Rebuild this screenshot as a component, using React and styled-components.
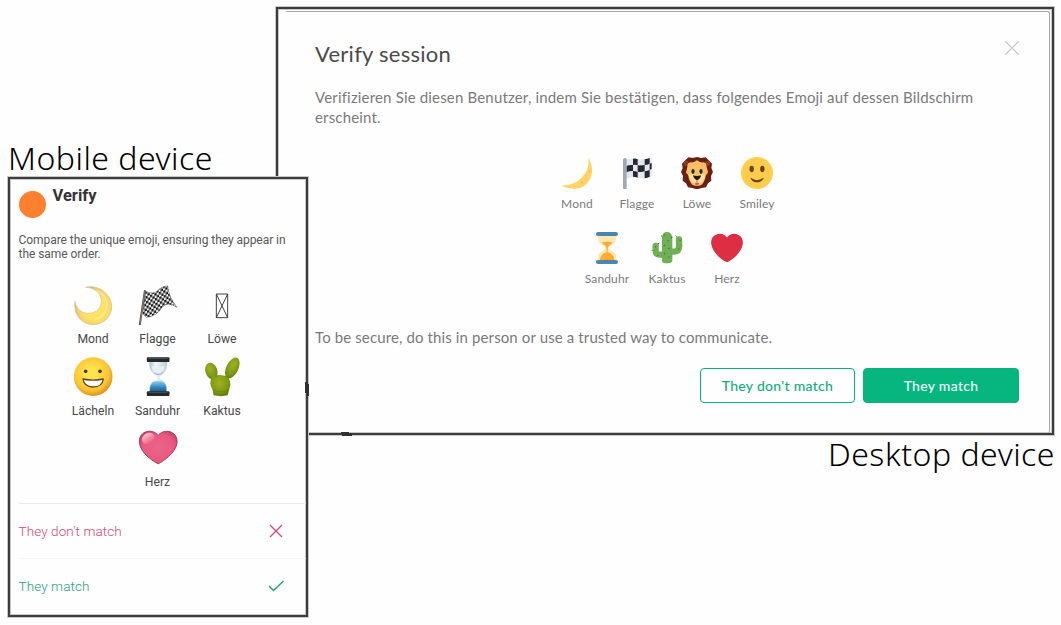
import React from "react";
import styled, { createGlobalStyle } from "styled-components";

const Global = createGlobalStyle`
  *, *::before, *::after { box-sizing: border-box; }
  body { margin: 0; background: #fefefe; overflow: hidden; }
  h1, h2, p, figure { margin: 0; font-weight: inherit; }
  button { font: inherit; cursor: pointer; }
`;

const Page = styled.main`
  display: grid;
  width: 1061px;
  height: 625px;
`;

const Device = styled.figure`
  grid-area: 1 / 1;
  display: flex;
  flex-direction: column;
  align-self: start;
`;

const DesktopDevice = styled(Device)`
  width: 778px;
  margin: 7px 0 0 276px;
`;

const MobileDevice = styled(Device)`
  width: 300px;
  margin: 138px 0 0 8px;
  z-index: 1;
`;

const Caption = styled.figcaption`
  height: 39px;
  font: 300 32px/${(p) => p.$line || "40px"} "Noto Sans", "Open Sans", sans-serif;
  letter-spacing: 0.5px;
  color: #000;
  white-space: nowrap;
  align-self: ${(p) => p.$align || "flex-start"};
  margin-right: -1px;
`;

const Frame = styled.div`
  border: 2px solid #3c3c3c;
  box-shadow: 0 0 0 1px #c8c8c8, inset 0 0 0 1px #c8c8c8;
  background: #fefefe;
  display: flex;
`;

const DesktopFrame = styled(Frame)`
  height: 428px;
  padding: 2px 2px 0 8px;
`;

const Dialog = styled.section`
  flex: 1;
  display: flex;
  flex-direction: column;
  border-top: 1px solid #a8a8a8;
  border-right: 1px solid #a8a8a8;
  border-radius: 0 3px 3px 0;
  padding: 27px 30px 0 29px;
  font-family: Lato, sans-serif;
  color: #7a7a7a;
`;

const DialogHeader = styled.header`
  display: flex;
  justify-content: space-between;
`;

const DialogTitle = styled.h1`
  font-size: 22px;
  line-height: 30px;
  letter-spacing: 0.25px;
  color: #4a4a4a;
`;

const CloseIcon = styled.svg`
  width: 14px;
  height: 14px;
  margin-top: 2px;
`;

const DialogText = styled.p`
  font-size: 15px;
  line-height: 20px;
  letter-spacing: ${(p) => p.$spacing};
  margin-top: ${(p) => p.$top};
  white-space: nowrap;
`;

const EmojiGrid = styled.div`
  display: flex;
  flex-direction: column;
  align-items: center;
`;

const EmojiRow = styled.div`
  display: flex;
`;

const DesktopEmojis = styled(EmojiGrid)`
  margin-top: 30px;
`;

const MobileEmojis = styled(EmojiGrid)`
  margin-top: 24px;
  padding-right: 1px;
`;

const Emoji = styled.div`
  display: flex;
  flex-direction: column;
  align-items: center;
  width: 60px;
  height: 75px;
  font-size: 12px;
  line-height: 15px;
  letter-spacing: 0.15px;
  svg { width: 32px; height: 32px; margin-bottom: 7px; }
`;

const MobileEmoji = styled(Emoji)`
  width: 64.5px;
  height: 71.5px;
  font-size: 12.2px;
  letter-spacing: 0;
  color: #484848;
  svg { width: 40px; height: 40px; margin-bottom: 7px; }
`;

const Buttons = styled.div`
  display: flex;
  justify-content: flex-end;
  gap: 8px;
  margin-top: 21px;
`;

const Button = styled.button`
  width: ${(p) => (p.$primary ? "156px" : "155px")};
  height: 35px;
  padding: 0;
  border: 1px solid #03b381;
  border-radius: 4px;
  background: ${(p) => (p.$primary ? "#07b67f" : "#fefefe")};
  color: ${(p) => (p.$primary ? "#f2fffa" : "#13ac7c")};
  font-size: 14px;
  font-weight: 500;
  letter-spacing: 0.3px;
`;

const MobileFrame = styled(Frame)`
  height: 440px;
  flex-direction: column;
  font-family: Roboto, sans-serif;
  color: #585858;
`;

const MobileHeader = styled.header`
  display: flex;
  gap: 7px;
  padding: 6px 0 0 8.5px;
`;

const Avatar = styled.span`
  width: 27px;
  height: 27px;
  margin-top: 6px;
  border-radius: 50%;
  background: #ff802e;
`;

const MobileTitle = styled.h2`
  font-size: 16.5px;
  font-weight: 700;
  line-height: 22px;
  color: #333;
`;

const MobileText = styled.p`
  padding: 15px 0 0 8.5px;
  font-size: 12px;
  line-height: 14px;
  white-space: nowrap;
  letter-spacing: -0.05px;
`;

const Actions = styled.div`
  display: flex;
  flex-direction: column;
  margin-top: 3px;
`;

const Action = styled.button`
  display: flex;
  align-items: center;
  justify-content: space-between;
  height: 55.5px;
  margin-left: 8.5px;
  padding: 0 21px 0 0;
  border: 0;
  border-top: 1px solid ${(p) => p.$line};
  background: transparent;
  color: ${(p) => p.$color};
  font-size: 13.5px;
  font-weight: 300;
  letter-spacing: 0.1px;
  svg { width: 18px; height: 18px; }
`;

const DeskMoon = () => (
  <svg viewBox="33 36 96 96">
    <path d="M115 38C130 61 131 91 113 113C92 137 55 136 35 120Q65 123 88 104C111 84 118 65 115 38Z" fill="#ffd469" />
    <path d="M117 76l5 2-2 6-5-2zM91 112l7-3 2 6-7 3zM69 123l7-1-3 5zM106 91l4 2-3 4z" fill="#ffac33" opacity=".55" />
  </svg>
);

const DeskFlag = () => (
  <svg viewBox="213 36 96 96">
    <path d="M229 45Q247 37 263 43Q282 45 305 38V96Q290 103 267 99Q249 94 229 101Z" fill="#e5e7ee" />
    <g fill="#252831">
      <path d="M249 41q7-2 14 2v18q-7-3-14-1zM284 43q8-1 15-4v17q-8 4-15 4z" />
      <path d="M229 63q9-4 20-3v18q-10-1-20 4zM263 61q10 1 21-1v19q-10 3-21 1zM299 56l6-2v18l-6 3z" />
      <path d="M249 78q7 0 14 3v17q-7-3-14-3zM284 79q9-1 15-4v20q-8 4-15 5z" />
    </g>
    <rect x="219" y="39" width="11" height="94" rx="5" fill="#a2a9b1" />
  </svg>
);

const DeskLion = () => (
  <svg viewBox="393 36 96 96">
    <path d="M441 36l13 3 13-2 9 9 10 10-2 13 5 12-6 12 1 14-10 8-6 12-13 2-14 4-14-4-13-2-6-12-10-8 1-14-6-12 5-12-2-13 10-10 9-9 13 2z" fill="#662113" />
    <circle cx="409" cy="55" r="8" fill="#8d3d1c" />
    <circle cx="473" cy="55" r="8" fill="#8d3d1c" />
    <path d="M412 66Q412 53 422 52Q432 54 441 46Q450 54 460 52Q470 53 470 66L474 80Q472 89 467 91Q466 108 455 119Q441 126 427 119Q416 108 415 91L408 83Z" fill="#ffbd68" />
    <path d="M431 84L415 90L424 110Q441 124 458 110L467 90L451 84L446 94H436Z" fill="#ffdca0" />
    <ellipse cx="429" cy="79" rx="5" ry="8" fill="#1c5b3f" />
    <ellipse cx="453" cy="79" rx="5" ry="8" fill="#1c5b3f" />
    <ellipse cx="429" cy="80" rx="3" ry="6" fill="#12271f" />
    <ellipse cx="453" cy="80" rx="3" ry="6" fill="#12271f" />
    <path d="M429 91Q440 95 453 91Q452 102 441 106Q431 102 429 91Z" fill="#261a18" />
    <path d="M441 104v7" fill="none" stroke="#8a4a25" strokeWidth="2" />
    <ellipse cx="441" cy="116" rx="6" ry="3.500" fill="#e8504a" />
  </svg>
);

const DeskSmiley = () => (
  <svg viewBox="573 36 96 96">
    <circle cx="621" cy="84" r="48" fill="#ffcc4d" />
    <ellipse cx="605" cy="72" rx="6.5" ry="9.5" fill="#664500" />
    <ellipse cx="637" cy="72" rx="6.5" ry="9.5" fill="#664500" />
    <path d="M603 99Q621 112 639 99Q641 97 640 101Q634 112 621 112Q608 112 602 101Q601 97 603 99Z" fill="#664500" />
  </svg>
);

const DeskHourglass = () => (
  <svg viewBox="123 36 96 96">
    <path d="M144 46H199V56C199 73 177 77 177 84S199 94 199 112V122H144V112C144 94 166 91 166 84S144 73 144 56Z" fill="#ffe8b6" />
    <path d="M155 67Q171 64 188 67Q184 74 176 78Q173 81 173 96Q191 100 194 122H149Q152 100 170 96Q170 81 167 78Q159 74 155 67Z" fill="#ffac33" />
    <rect x="138" y="36" width="66" height="12" rx="6" fill="#4a86ad" />
    <rect x="138" y="120" width="66" height="12" rx="6" fill="#4a86ad" />
  </svg>
);

const DeskCactus = () => (
  <svg viewBox="303 36 96 96">
    <g fill="none" stroke="#70b055" strokeLinecap="round" strokeWidth="19">
      <path d="M317 78v15q0 11 15 11h9M387 58v23q0 14-16 14h-8" />
    </g>
    <path d="M336 52Q338 36 351 36T367 52V123Q366 130 351 130T336 123Z" fill="#70b055" />
    <path d="M337 50l-4-3M341 45h3M363 54l4-2M353 62h3M341 76h4M355 85h4M342 101h3M355 111h3M324 72l4-3M315 81h3M308 90l-2 2M380 50l-3-3M389 61h3M395 75l2 2M385 87h3M324 106l-3 3" stroke="#35631f" strokeWidth="3" />
  </svg>
);

const DeskHeart = () => (
  <svg viewBox="0 0 36 36">
    <path fill="#dd2e44" d="M35.885 11.833c0-5.45-4.418-9.868-9.867-9.868-3.308 0-6.227 1.633-8.018 4.129-1.791-2.496-4.71-4.129-8.017-4.129-5.45 0-9.868 4.417-9.868 9.868 0 .772.098 1.52.266 2.241C1.751 22.587 11.216 31.568 18 34.034c6.783-2.466 16.249-11.447 17.617-19.959.17-.721.268-1.469.268-2.242z" />
  </svg>
);

const MoonIcon = () => (
  <svg viewBox="39 30 120 120">
    <defs>
      <radialGradient id="moon" cx="55%" cy="55%" r="55%">
        <stop offset=".55" stopColor="#ffe464" />
        <stop offset=".85" stopColor="#f5d36c" />
        <stop offset="1" stopColor="#cdb28b" />
      </radialGradient>
    </defs>
    <path d="M77 37C111 27 155 55 155 94C156 125 130 149 99 149C66 149 39 119 45 79C48 102 66 116 87 115C110 114 126 97 124 75C122 55 104 38 77 37Z" fill="url(#moon)" stroke="#d5bd95" strokeWidth="2" />
    <path d="M111 47Q143 62 141 91Q137 126 105 133" fill="none" stroke="#fff0a4" strokeWidth="5" opacity=".6" />
  </svg>
);

const FlagIcon = () => (
  <svg viewBox="232.5 30 120 120">
    <defs>
      <pattern id="checks" width="14" height="14" patternUnits="userSpaceOnUse" patternTransform="rotate(-18) skewX(-12)">
        <rect width="14" height="14" fill="#f7f7f7" />
        <path d="M0 0h7v7H0zM7 7h7v7H7z" fill="#111" />
      </pattern>
    </defs>
    <path d="M254 49Q280 59 291 48Q303 33 322 33Q322 60 349 97Q324 79 306 95Q288 125 257 127L247 116Z" fill="url(#checks)" stroke="#555" strokeWidth="1.5" />
    <path d="M253 48L238 149" stroke="#55504c" strokeWidth="6" strokeLinecap="round" />
    <path d="M253 49L239 146" stroke="#aaa29a" strokeWidth="1.5" />
  </svg>
);

const MissingIcon = () => (
  <svg viewBox="426 30 120 120">
    <path d="M469 57H503V128H469ZM469 57L503 128M503 57L469 128" fill="none" stroke="#333" strokeWidth="2.8" />
  </svg>
);

const GrinIcon = () => (
  <svg viewBox="39 21 120 120">
    <defs>
      <radialGradient id="grin" cx="45%" cy="40%" r="60%">
        <stop offset=".2" stopColor="#ffe34f" />
        <stop offset=".75" stopColor="#fcc436" />
        <stop offset="1" stopColor="#dd921d" />
      </radialGradient>
    </defs>
    <circle cx="99.500" cy="80" r="58" fill="url(#grin)" />
    <circle cx="77" cy="64" r="5.500" fill="#493a26" />
    <circle cx="120" cy="64" r="5.500" fill="#493a26" />
    <path d="M69 87Q99 94 130 87Q127 111 99 111Q72 110 69 87Z" fill="#fff" stroke="#664820" strokeWidth="4" strokeLinejoin="round" />
    <path d="M87 91v17M100 92v18M113 91v17" fill="none" stroke="#ddd3bd" strokeWidth="1.2" />
  </svg>
);

const HourglassIcon = () => (
  <svg viewBox="232.5 21 120 120">
    <defs>
      <linearGradient id="glass" x2="1">
        <stop stopColor="#aec0c9" />
        <stop offset=".35" stopColor="#f2f7fa" />
        <stop offset="1" stopColor="#b9ccd5" />
      </linearGradient>
      <linearGradient id="sand" y2="1" x2="0">
        <stop stopColor="#91cdec" />
        <stop offset=".55" stopColor="#318cc0" />
        <stop offset="1" stopColor="#195985" />
      </linearGradient>
    </defs>
    <path d="M267 33H320C322 55 314 69 298 79V86C317 95 322 110 319 127H267C264 108 271 95 289 86V79C271 68 264 52 267 33Z" fill="url(#glass)" />
    <path d="M277 97Q293 89 309 97Q320 107 317 126H269Q266 107 277 97Z" fill="url(#sand)" />
    <path d="M273 48Q293 54 313 48Q309 67 293 76Q276 65 273 48Z" fill="#e9f0f2" />
    <path d="M281 69Q293 78 306 68" fill="none" stroke="#8fa8b5" strokeWidth="3" />
    <rect x="259" y="22" width="68" height="14" rx="3" fill="#25292b" />
    <rect x="259" y="124" width="68" height="14" rx="3" fill="#25292b" />
    <path d="M264 25H321M264 127H321" stroke="#666" strokeWidth="2" />
  </svg>
);

const CactusIcon = () => (
  <svg viewBox="426 21 120 120">
    <defs>
      <radialGradient id="cactus" cx="45%" cy="35%" r="65%">
        <stop stopColor="#9fb31e" />
        <stop offset=".7" stopColor="#7f9916" />
        <stop offset="1" stopColor="#647c0e" />
      </radialGradient>
    </defs>
    <ellipse cx="517" cy="54" rx="18" ry="34" transform="rotate(26 517 54)" fill="url(#cactus)" />
    <ellipse cx="454" cy="63" rx="18" ry="25" transform="rotate(-18 454 63)" fill="url(#cactus)" />
    <path d="M458 78Q482 71 503 80Q515 95 509 113L503 136Q483 141 461 136L458 121Q444 96 458 78Z" fill="url(#cactus)" />
    <path d="M461 120Q481 130 505 120M465 82L472 78M494 78L503 82" fill="none" stroke="#5b760e" strokeWidth="2" opacity=".7" />
  </svg>
);

const HeartIcon = () => (
  <svg viewBox="232.5 25.5 120 120">
    <defs>
      <radialGradient id="heart" cx="50%" cy="50%" r="58%">
        <stop stopColor="#eb658b" />
        <stop offset=".75" stopColor="#e9577f" />
        <stop offset="1" stopColor="#c54066" />
      </radialGradient>
      <linearGradient id="shine" x2="0" y2="1">
        <stop stopColor="#ffd0d7" stopOpacity=".9" />
        <stop offset="1" stopColor="#ffd0d7" stopOpacity="0" />
      </linearGradient>
    </defs>
    <path d="M293 48C279 28 243 31 237 59C232 92 268 120 293 133C319 119 355 90 349 59C343 31 307 29 293 48Z" fill="url(#heart)" stroke="#9f4057" strokeWidth="3" />
    <ellipse cx="263" cy="57" rx="20" ry="16" transform="rotate(-35 263 57)" fill="url(#shine)" />
  </svg>
);

const desktopRows = [
  [["Mond", DeskMoon], ["Flagge", DeskFlag], ["Löwe", DeskLion], ["Smiley", DeskSmiley]],
  [["Sanduhr", DeskHourglass], ["Kaktus", DeskCactus], ["Herz", DeskHeart]],
];

const mobileRows = [
  [["Mond", MoonIcon], ["Flagge", FlagIcon], ["Löwe", MissingIcon]],
  [["Lächeln", GrinIcon], ["Sanduhr", HourglassIcon], ["Kaktus", CactusIcon]],
  [["Herz", HeartIcon]],
];

const Rows = ({ rows, cell: Cell }) =>
  rows.map((row, i) => (
    <EmojiRow key={i}>
      {row.map(([name, Icon]) => (
        <Cell key={name}>
          <Icon />
          <span>{name}</span>
        </Cell>
      ))}
    </EmojiRow>
  ));

const FrameMarks = styled.svg`
  grid-area: 1 / 1;
  z-index: 2;
  width: 50px;
  height: 60px;
  margin: 379px 0 0 303px;
  pointer-events: none;
`;

export default function App() {
  return (
    <>
      <Global />
      <Page>
        <DesktopDevice>
          <DesktopFrame>
            <Dialog>
              <DialogHeader>
                <DialogTitle>Verify session</DialogTitle>
                <CloseIcon viewBox="0 0 14 14">
                  <path d="M.5.5l13 13M13.500.5l-13 13" stroke="#c4c4c4" fill="none" strokeWidth="1.2" />
                </CloseIcon>
              </DialogHeader>
              <DialogText $top="18px" $spacing="0.17px">
                Verifizieren Sie diesen Benutzer, indem Sie bestätigen, dass folgendes Emoji auf dessen Bildschirm
                <br />
                erscheint.
              </DialogText>
              <DesktopEmojis>
                <Rows rows={desktopRows} cell={Emoji} />
              </DesktopEmojis>
              <DialogText $top="20px" $spacing="0.12px">
                To be secure, do this in person or use a trusted way to communicate.
              </DialogText>
              <Buttons>
                <Button>They don't match</Button>
                <Button $primary>They match</Button>
              </Buttons>
            </Dialog>
          </DesktopFrame>
          <Caption $align="flex-end" $line="38px">Desktop device</Caption>
        </DesktopDevice>
        <MobileDevice>
          <Caption>Mobile device</Caption>
          <MobileFrame>
            <MobileHeader>
              <Avatar />
              <MobileTitle>Verify</MobileTitle>
            </MobileHeader>
            <MobileText>
              Compare the unique emoji, ensuring they appear in
              <br />
              the same order.
            </MobileText>
            <MobileEmojis>
              <Rows rows={mobileRows} cell={MobileEmoji} />
            </MobileEmojis>
            <Actions>
              <Action $color="#d9486e" $line="#e9e9ee">
                They don't match
                <svg viewBox="0 0 18 18">
                  <path d="M3 3l12 12M15 3L3 15" stroke="currentColor" strokeWidth="1.3" fill="none" />
                </svg>
              </Action>
              <Action $color="#20a172" $line="#f7f7f9">
                They match
                <svg viewBox="0 0 18 18">
                  <path d="M2 9l4.500 4.500L16.500 4" stroke="currentColor" strokeWidth="1.4" fill="none" />
                </svg>
              </Action>
            </Actions>
          </MobileFrame>
        </MobileDevice>
        <FrameMarks viewBox="0 0 50 60">
          <path d="M2 3h3v2h1v12H4v-3H2zM38 53h8v1h3v3H39z" fill="#303030" />
        </FrameMarks>
      </Page>
    </>
  );
}
